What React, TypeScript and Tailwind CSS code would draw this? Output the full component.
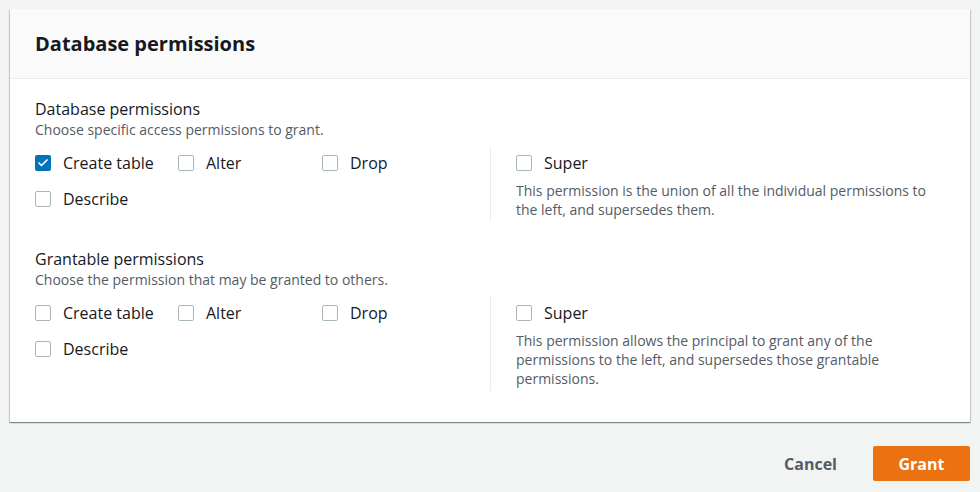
import { Check } from 'lucide-react';

interface PermissionSectionProps {
  title: string;
  description: string;
  checked: string[];
  superText: string;
}

const OPTIONS = ['Create table', 'Alter', 'Drop', 'Describe'];

function Checkbox({ label, checked }: { label: string; checked?: boolean }) {
  return (
    <label className="flex h-6 items-center gap-[12px] text-[16px] text-[#16191f]">
      {checked ? (
        <span className="flex h-4 w-4 items-center justify-center rounded-[2px] bg-[#0073bb]">
          <Check className="h-3 w-3 text-white" strokeWidth={3.5} />
        </span>
      ) : (
        <span className="h-4 w-4 rounded-[2px] border border-[#aab7b8] bg-white" />
      )}
      <span>{label}</span>
    </label>
  );
}

function PermissionSection({ title, description, checked, superText }: PermissionSectionProps) {
  return (
    <div>
      <div className="text-[16px] leading-[22px] text-[#16191f]">{title}</div>
      <div className="text-[14px] leading-[20px] text-[#545b64]">{description}</div>
      <div className="mt-[6px] grid grid-cols-2">
        {/* individual permissions */}
        <div className="grid grid-cols-[143px_144px_1fr] gap-y-3 self-start pt-[5px]">
          {OPTIONS.map((o) => (
            <Checkbox key={o} label={o} checked={checked.includes(o)} />
          ))}
        </div>
        {/* super */}
        <div className="border-l border-[#eaeded] pl-[25px] pt-[5px] pb-[3px]">
          <Checkbox label="Super" />
          <p className="mt-[6px] max-w-[418px] text-[14px] leading-[19px] text-[#545b64]">{superText}</p>
        </div>
      </div>
    </div>
  );
}

export default function App() {
  return (
    <div
      className="min-h-[492px] bg-[#f2f3f3] px-[10px] pt-[9px]"
      style={{ fontFamily: '"Open Sans", "Liberation Sans", sans-serif' }}
    >
      <div className="bg-white shadow-[0_1px_1px_0_rgba(0,28,36,0.3),1px_1px_1px_0_rgba(0,28,36,0.15),-1px_1px_1px_0_rgba(0,28,36,0.15)]">
        <div className="flex h-[70px] items-center border-b border-[#eaeded] bg-[#fafafa] px-[25px]">
          <h2 className="text-[20px] font-bold text-[#16191f]">Database permissions</h2>
        </div>
        <div className="flex flex-col gap-[26px] px-[25px] pt-[19px] pb-[31px]">
          <PermissionSection
            title="Database permissions"
            description="Choose specific access permissions to grant."
            checked={['Create table']}
            superText="This permission is the union of all the individual permissions to the left, and supersedes them."
          />
          <PermissionSection
            title="Grantable permissions"
            description="Choose the permission that may be granted to others."
            checked={[]}
            superText="This permission allows the principal to grant any of the permissions to the left, and supersedes those grantable permissions."
          />
        </div>
      </div>
      <div className="mt-[24px] flex items-center justify-end gap-[36px]">
        <button className="text-[16px] font-bold text-[#545b64]">Cancel</button>
        <button className="h-[35px] w-[97px] rounded-[2px] bg-[#ec7211] text-[16px] font-bold text-white">
          Grant
        </button>
      </div>
    </div>
  );
}
